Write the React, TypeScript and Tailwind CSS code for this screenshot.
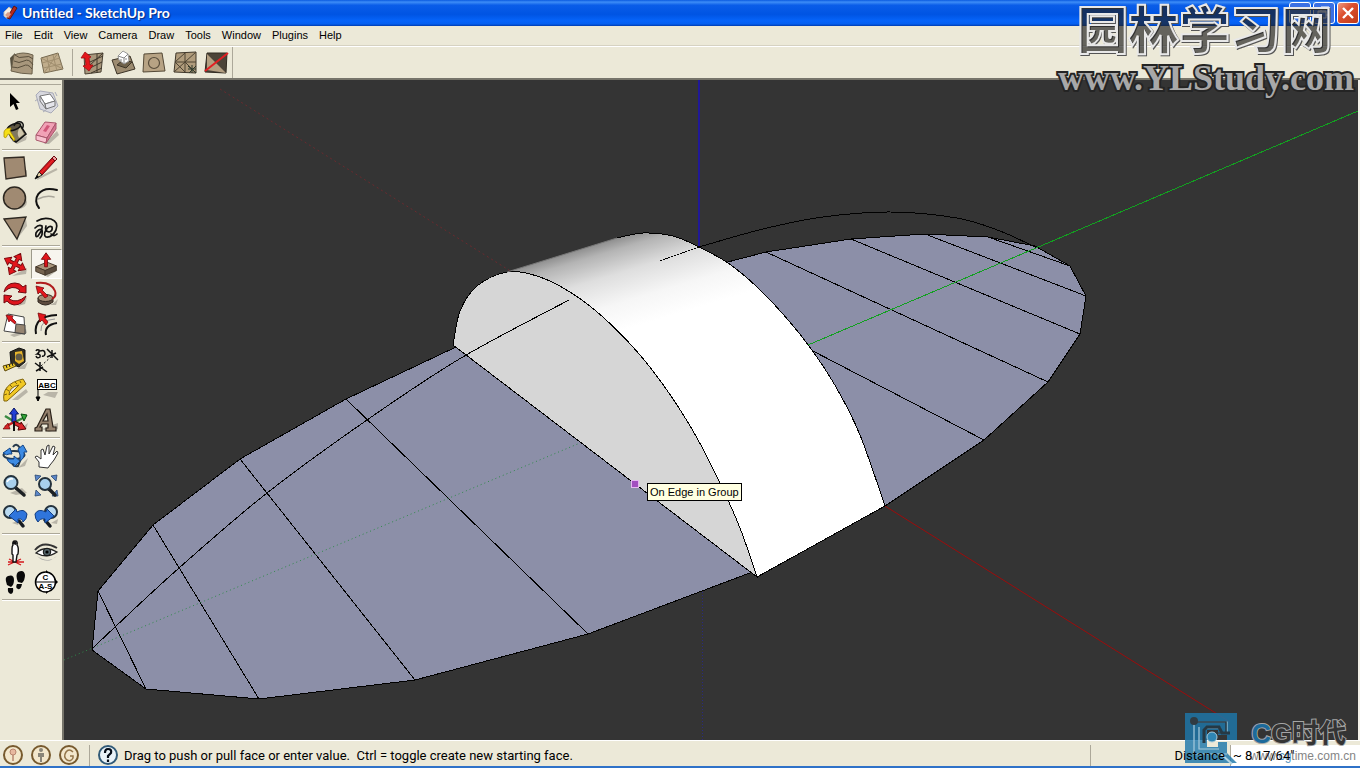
import React from "react";

type Pt = [number, number];

/** Smooth open curve through the given points (Catmull-Rom to Bezier). */
function curve(points: Pt[], start = "M"): string {
  let d = `${start}${points[0][0]} ${points[0][1]}`;
  for (let i = 0; i < points.length - 1; i++) {
    const a = points[Math.max(0, i - 1)];
    const b = points[i];
    const c = points[i + 1];
    const e = points[Math.min(points.length - 1, i + 2)];
    d += `C${b[0] + (c[0] - a[0]) / 6} ${b[1] + (c[1] - a[1]) / 6} ${c[0] - (e[0] - b[0]) / 6} ${c[1] - (e[1] - b[1]) / 6} ${c[0]} ${c[1]}`;
  }
  return d;
}

const frontArch: Pt[] = [[453, 345], [460, 311], [477, 286], [507, 272], [537, 276], [570, 292], [604, 318], [640, 355], [671, 396], [697, 438], [720, 483], [740, 528], [757, 577]];
const backArch: Pt[] = [[617, 238], [643, 233], [673, 236], [699, 247], [728, 263], [756, 286], [782, 313], [809, 346], [836, 387], [860, 435], [885, 506]];
const lowerArc: Pt[] = [[92, 649], [115, 627], [179, 568], [267, 493], [367, 420], [461, 358], [569, 300]];
const upperArc: Pt[] = [[699, 247], [763, 229], [823, 217], [890, 212], [957, 218], [1000, 231], [1037, 248]];

function Model() {
  return (
    <svg className="block h-full w-full" viewBox="64 80 1294 660" preserveAspectRatio="xMidYMid slice" role="img" aria-label="Model view">
      <defs>
        <linearGradient id="vault" gradientUnits="userSpaceOnUse" x1="512" y1="270" x2="538" y2="356">
          <stop offset="0" stopColor="#8f8f8f" />
          <stop offset="0.12" stopColor="#b4b4b4" />
          <stop offset="0.38" stopColor="#dedede" />
          <stop offset="0.7" stopColor="#f6f6f6" />
          <stop offset="1" stopColor="#ffffff" />
        </linearGradient>
      </defs>
      <g fill="none" strokeWidth="1">
        <rect x="698" y="80" width="2" height="167" fill="#1a10b8" fillOpacity=".75" />
        <path d="M702.500 580V740" stroke="#2a2a80" strokeDasharray="1 2" />
        <path d="M220 89L512 272" stroke="#6a2a2e" strokeDasharray="2 3" />
        <path d="M885 506L1230 722" stroke="#9c0c0c" />
      </g>
      <g fill="#8c8fa8" stroke="#000" strokeWidth="1" shapeRendering="crispEdges">
        <path d="M456 347L346 399L240 459L153 525L98 591L92 650L146 689L259 699L415 680L588 634L755 571Z" />
        <path d="M720 264L766 252L851 239L925 234L988 237L1035 246L1070 266L1086 296L1080 334L1048 382L984 440L885 506L760 400Z" />
        <path fill="none" d="M346 399L588 634M240 459L415 680M153 525L259 699M98 591L146 689M766 252L1048 382M851 239L1080 334M925 234L1086 296M988 237L1070 266M811 350L984 440" />
        <path fill="none" d={curve(upperArc)} />
      </g>
      <path d="M64 660L580 443" stroke="#2f8a4a" strokeDasharray="1 3" fill="none" />
      <path d="M808 345L1358 111" stroke="#12a020" fill="none" shapeRendering="crispEdges" />
      <path fill="url(#vault)" d={`${curve(backArch)}L757 577L507 272Z`} />
      <path fill="#d6d6d6" d={`${curve(frontArch)}Z`} />
      <g fill="none" stroke="#000" shapeRendering="crispEdges">
        <path d={`${curve(frontArch)}Z`} />
        <path d={curve(backArch)} />
        <path d="M885 506L757 577" />
        <path d={curve(lowerArc)} />
        <path d="M660 261L699 247" strokeDasharray="2 1" />
      </g>
      <path d="M507 272L617 238" stroke="#777" fill="none" />
      <rect x="631.500" y="480.500" width="7" height="7" fill="#a24fc0" stroke="#e6b8f0" />
    </svg>
  );
}

const shade = "#b9b5a8";

const icons: Record<string, React.ReactNode> = {
  Select: <path d="M10 6V20L13.500 17L16 23L18.500 22L16 16H20Z" fill="#000" />,
  Component: (
    <g strokeLinejoin="round">
      <path d="M5 8L9 4L22 6L27 19L20 26L9 22Z" fill="#d8d8de" stroke="#a9abb8" />
      <path d="M9 9L19 7L24 14L14 17Z" fill="#fff" stroke="#777" />
      <path d="M14 17L24 14V19L15 22ZM9 9L14 17L15 22L9 14Z" fill="#e4e4ea" stroke="#777" />
      <path d="M4 14L7 12M24 5L26 9M12 25L15 23" stroke="#a9abb8" />
    </g>
  ),
  "Paint Bucket": (
    <g>
      <path d="M12 24L27 19L26 23L17 27Z" fill={shade} />
      <path d="M8 12L20 8L26 17L16 25Q10 22 8 12Z" fill="#7f775f" stroke="#111" strokeWidth="1.500" />
      <path d="M20 10L24 17L19 21Q16 16 20 10Z" fill="#cfc6ac" />
      <ellipse cx="14" cy="10" rx="7" ry="3" transform="rotate(-20 14 10)" fill="#5c5442" stroke="#111" strokeWidth="1.500" />
      <path d="M14 9Q16 4 21 5Q25 7 22 12" fill="none" stroke="#111" strokeWidth="1.500" />
      <path d="M11 11Q5 11 4 15V20Q6 22 7 19Q7 17 9 17L14 24L15 22L10 14Z" fill="#f5df18" stroke="#ad9000" strokeWidth=".8" />
    </g>
  ),
  Eraser: (
    <g strokeLinejoin="round">
      <path d="M13 27L26 14L28 18L18 27Z" fill={shade} />
      <path d="M5 18L14 5L25 6L16 21Z" fill="#f1a2b6" stroke="#a9576c" />
      <path d="M5 18L16 21L15 26L5 23Z" fill="#f8c2cf" stroke="#a9576c" />
      <path d="M16 21L25 6V12L15 26Z" fill="#d57591" stroke="#a9576c" />
      <path d="M16 8L19 9L15 15L12 14Z" fill="#d05879" />
    </g>
  ),
  Rectangle: (
    <g>
      <path d="M7 26L27 17V24Z" fill={shade} />
      <path d="M4 5L24 4L26 23L6 26Z" fill="#a08a72" stroke="#322a22" strokeWidth="1.300" />
    </g>
  ),
  Line: (
    <g>
      <path d="M6 26L26 16" stroke={shade} strokeWidth="2" />
      <path d="M8 19L21 5L24 8L11 22Z" fill="#d5121b" stroke="#6a0b10" />
      <path d="M10 20L22 7" stroke="#e8352f" />
      <path d="M21 5L23 3L26 6L24 8Z" fill="#f09d9d" stroke="#6a0b10" />
      <path d="M8 19L11 22L4 26Z" fill="#e7d3a4" stroke="#222" />
      <path d="M4 26L6 22L8 24Z" fill="#000" />
    </g>
  ),
  Circle: (
    <g>
      <ellipse cx="18" cy="19" rx="9" ry="7" fill={shade} />
      <circle cx="14.500" cy="15" r="11" fill="#a08a72" stroke="#2c2720" strokeWidth="1.500" />
    </g>
  ),
  Arc: (
    <g fill="none" strokeLinecap="round">
      <path d="M7 16Q15 12 23 14" stroke="#a9a69b" strokeWidth="1.500" />
      <path d="M8 25C1 17 7 2 26 7" stroke="#111" strokeWidth="2" />
    </g>
  ),
  Polygon: (
    <g>
      <path d="M17 26L26 6L27 13Z" fill={shade} />
      <path d="M4 6L26 4L17 26Z" fill="#a08a72" stroke="#2c2720" strokeWidth="1.300" />
    </g>
  ),
  Freehand: (
    <path d="M6 8Q12 4 20 6Q28 9 25 17Q21 25 15 24Q12 22 15 17Q18 12 21 14Q22 18 18 19Q13 18 15 13M4 15Q8 11 11 13Q12 16 7 23Q4 25 5 20Q8 15 11 17Q12 22 9 25M20 21Q23 24 26 21" fill="none" stroke="#111" strokeWidth="1.700" strokeLinecap="round" />
  ),
  Move: (
    <g>
      <path d="M12 27L27 19L26 25Z" fill={shade} />
      <g fill="#e3161b" stroke="#77090d" strokeWidth=".9" strokeLinejoin="round">
        <path d="M13.500 13V9H10.500L15 3L19.500 9H16.500V13Z" transform="rotate(28 15 15)" />
        <path d="M13.500 13V9H10.500L15 3L19.500 9H16.500V13Z" transform="rotate(118 15 15)" />
        <path d="M13.500 13V9H10.500L15 3L19.500 9H16.500V13Z" transform="rotate(208 15 15)" />
        <path d="M13.500 13V9H10.500L15 3L19.500 9H16.500V13Z" transform="rotate(298 15 15)" />
      </g>
      <circle cx="15" cy="15" r="2.500" fill="#e3161b" />
    </g>
  ),
  "Push/Pull": (
    <g>
      <path d="M7 24L16 27L26 19L27 22L17 29Z" fill={shade} />
      <path d="M4 18L16 13L26 17L14 22Z" fill="#a8957b" stroke="#433628" />
      <path d="M4 18L14 22V27L4 23Z" fill="#766450" stroke="#433628" />
      <path d="M14 22L26 17V22L14 27Z" fill="#5b4d3f" stroke="#433628" />
      <path d="M13.500 18V10H10L15 3L20 10H16.500V18Z" fill="#e3161b" stroke="#77090d" />
    </g>
  ),
  Rotate: (
    <g>
      <path d="M18 27L27 18L25 25Z" fill={shade} />
      <path d="M4 13Q6 4 15 4Q20 4 23 8L26 6V14L18 13L20 11Q12 5 4 13Z" fill="#df151d" stroke="#700a10" />
      <path d="M26 17Q23 26 14 26Q9 25 7 22L4 24V16L12 17L9 20Q17 25 26 17Z" fill="#df151d" stroke="#700a10" />
    </g>
  ),
  "Follow Me": (
    <g>
      <path d="M12 26Q20 28 27 20L25 26Z" fill={shade} />
      <path d="M7 19V23Q14 29 22 23V19Z" fill="#5c4b3e" stroke="#2f261e" />
      <ellipse cx="14.500" cy="19" rx="7.500" ry="3.500" fill="#a38c74" stroke="#2f261e" />
      <path d="M5 4Q20 2 24 12Q26 17 21 20" fill="none" stroke="#b01c1c" strokeWidth="2" />
      <path d="M14 19L9 13L7 15L5 7L13 9L11 11L17 17Z" fill="#e3161b" stroke="#77090d" strokeWidth=".8" />
    </g>
  ),
  Scale: (
    <g>
      <path d="M10 26L26 20L27 24L14 28Z" fill={shade} />
      <path d="M8 5L24 8L25 25L4 22Z" fill="#fff" stroke="#444" />
      <path d="M16 15L25 16V25L15 23.500Z" fill="#958471" stroke="#444" />
      <path d="M15 15L10 11L9 13L6 6L13 7L12 9L16 13Z" fill="#e3161b" stroke="#77090d" strokeWidth=".8" />
    </g>
  ),
  Offset: (
    <g fill="none">
      <path d="M5 25Q2 7 26 6M15 26Q13 16 26 14" stroke="#111" strokeWidth="2" />
      <path d="M10 22Q9 11 24 10" stroke="#999" />
      <path d="M15 16L11 11L9 13L7 4L15 6L13 8L17 13Z" fill="#e3161b" stroke="#77090d" strokeWidth=".8" />
    </g>
  ),
  "Tape Measure": (
    <g>
      <path d="M17 24L28 17L25 24Z" fill={shade} />
      <path d="M10 7L19 3L25 5V17L19 22L11 19Z" fill="#312e25" stroke="#111" />
      <path d="M15 7L22 6L24 16L19 19L15 16Z" fill="#e8b52b" />
      <circle cx="19" cy="12" r="3.500" fill="#615a46" />
      <path d="M3 21L14 18L16 21L5 26Z" fill="#edca2c" stroke="#5b470a" />
      <path d="M6 20L7 23M9 19L10 22M12 18L13 21" stroke="#222" />
    </g>
  ),
  Dimension: (
    <g fill="none" stroke="#111">
      <path d="M5 6Q6 4 8 5Q9 7 6 9Q10 9 9 12Q6 14 5 11M9 6Q14 4 14 9Q13 12 11 11" strokeWidth="1.500" />
      <path d="M16 4L27 15M16 12L25 8M21 5V13M4 18L16 27M5 26L12 22M9 17V26" strokeWidth="1.500" />
      <path d="M10 21L22 10" strokeDasharray="2 2" />
    </g>
  ),
  Protractor: (
    <g>
      <path d="M12 25L26 14L28 17L18 25Z" fill={shade} />
      <path d="M4 26Q1 9 23 4L26 9L7 26Z" fill="#f1c823" stroke="#80640c" />
      <path d="M9 20Q9 12 19 10Z" fill="#ede9dc" stroke="#80640c" />
      <path d="M4 20L7 19M6 14L9 16M10 10L12 12M15 7L17 9M20 6L21 8" stroke="#80640c" />
    </g>
  ),
  Text: (
    <g>
      <path d="M7 8V26M5 22H9L7 26Z" fill="#000" stroke="#000" />
      <path d="M17 17H27L24 23L12 20Z" fill={shade} />
      <rect x="6.500" y="4.500" width="19" height="10" fill="#fff" stroke="#000" />
      <text x="16" y="12.500" textAnchor="middle" fontSize="8" fontWeight="700" fontFamily="Liberation Sans, sans-serif">ABC</text>
    </g>
  ),
  Axes: (
    <g>
      <path d="M17 26L28 18L26 24Z" fill={shade} />
      <path d="M15 17L5 11M15 17L25 12" stroke="#3a8a42" strokeWidth="2.500" />
      <path d="M14 17L5 22" stroke="#c71b1e" strokeWidth="2.500" />
      <path d="M12 17V9H9.500L14 3L18.500 9H16V17Z" fill="#233fd4" stroke="#091662" />
      <path d="M21 9L27 10L24 16Z" fill="#35a83b" stroke="#084b10" />
      <path d="M14 16L21 19V17L26 24L18 25L19 22L13 19Z" fill="#d9262a" stroke="#500" />
      <path d="M8 18L3 24L10 24Z" fill="#d9262a" stroke="#500" strokeWidth=".6" />
      <path d="M14 17V26" stroke="#111" strokeWidth="2" />
    </g>
  ),
  "3D Text": (
    <g>
      <path d="M11 24L27 18L27 24L18 27Z" fill={shade} />
      <path d="M4 23L6 22L15 4H19L22 22H25V26H15V23H17L17 19H11L9 22H11V26H4ZM12 16H17L16 9Z" fill="#94816d" stroke="#282018" strokeWidth="1.200" fillRule="evenodd" />
    </g>
  ),
  Orbit: (
    <g fill="none">
      <path d="M18 27L28 17L25 25Z" fill={shade} />
      <ellipse cx="14" cy="14" rx="10.500" ry="4" stroke="#26394a" strokeWidth="2" />
      <path d="M13 6Q16 1 20 7Q23 15 18 25Q14 26 12 22" stroke="#26394a" strokeWidth="2" />
      <path d="M3 12L10 7L12 13L9 13Q7 15 3 12ZM18 8L23 4L27 11L24 11Q25 17 20 20Q21 14 18 8ZM7 18H14V15L20 20L14 26V23Q9 23 7 18Z" fill="#3d8be3" stroke="#144585" />
    </g>
  ),
  Pan: (
    <path d="M8 26L8 21L4 16L6 15L10 18L10 9L12 8L14 14L16 5L18 4L18 13L22 5L24 6L22 14L26 10L27 12L23 19L19 24L17 27Z" fill="#fff" stroke="#333" strokeLinejoin="round" />
  ),
  Zoom: (
    <g>
      <path d="M10 22L22 17L27 22L16 24Z" fill={shade} />
      <path d="M16 17L24 24" stroke="#1c2023" strokeWidth="3.500" strokeLinecap="round" />
      <circle cx="11" cy="11.500" r="6.500" fill="#a8d0ed" stroke="#24323c" strokeWidth="2" />
      <path d="M7 11Q9 7 13 8" stroke="#fff" strokeWidth="1.500" fill="none" />
    </g>
  ),
  "Zoom Extents": (
    <g>
      <path d="M4 4L10 5L5 10ZM26 4L20 5L25 10ZM4 25L10 24L5 19ZM27 25L21 25L26 19Z" fill="#5b86c8" stroke="#28466f" strokeWidth=".8" />
      <path d="M18 18L24 24" stroke="#1c2023" strokeWidth="3.500" strokeLinecap="round" />
      <circle cx="14" cy="13" r="6" fill="#a8d0ed" stroke="#24323c" strokeWidth="2" />
    </g>
  ),
  Previous: (
    <g>
      <path d="M12 22L20 19L18 24Z" fill={shade} />
      <path d="M19 20L23 25" stroke="#171c22" strokeWidth="3.500" strokeLinecap="round" />
      <circle cx="10" cy="11" r="6" fill="#badaf0" stroke="#24323c" strokeWidth="2" />
      <path d="M9 15L16 8L17 11Q24 7 27 13Q27 18 23 21Q22 17 18 18L18 22Z" fill="#2f75dc" stroke="#113d82" />
    </g>
  ),
  Next: (
    <g>
      <path d="M20 22L27 18L26 23Z" fill={shade} />
      <path d="M14 19L19 25" stroke="#171c22" strokeWidth="3.500" strokeLinecap="round" />
      <circle cx="20" cy="11" r="6" fill="#badaf0" stroke="#24323c" strokeWidth="2" />
      <path d="M23 15L16 8L15 11Q7 7 4 13Q4 18 7 21Q9 17 14 18L14 22Z" fill="#2f75dc" stroke="#113d82" />
    </g>
  ),
  "Position Camera": (
    <g>
      <path d="M9 22L21 28M21 22L8 28M8 25H24" stroke="#d4191d" strokeWidth="1.300" />
      <path d="M12 12Q12 9 13 8Q12 4 15 4Q18 4 17 8Q19 10 18 17L17 18L16 25H13L13 18L12 17Z" fill="#fff" stroke="#111" strokeWidth="1.400" />
      <path d="M13 5Q15 3 17 6L16 8L13 7Z" fill="#111" />
    </g>
  ),
  "Look Around": (
    <g>
      <path d="M6 19Q17 27 26 19L20 23Q12 25 6 19Z" fill="#999" />
      <path d="M5 16Q14 8 26 15Q16 22 5 16Z" fill="#fff" stroke="#222" strokeWidth="1.300" />
      <path d="M4 13Q12 3 26 11" fill="none" stroke="#333" strokeWidth="2" />
      <circle cx="16" cy="15" r="3.800" fill="#526267" stroke="#111" />
      <circle cx="16" cy="15" r="1.600" fill="#000" />
    </g>
  ),
  Walk: (
    <g fill="#0a0a0a">
      <path d="M8 9Q14 7 14 13Q14 18 11 20L7 18Q4 10 8 9ZM8 21L13 21Q14 26 11 27Q7 26 8 21ZM18 5Q24 2 25 8Q25 13 22 16L18 15Q15 8 18 5ZM17 17L22 17Q21 23 18 22Q15 21 17 17Z" />
    </g>
  ),
  "Section Plane": (
    <g>
      <path d="M15 3L27 15L15 27Z" fill="#000" />
      <circle cx="14.500" cy="15" r="10" fill="#fff" stroke="#000" strokeWidth="1.500" />
      <path d="M4 15H25" stroke="#000" />
      <text x="14.500" y="13" textAnchor="middle" fontSize="8" fontWeight="700" fontFamily="Liberation Sans, sans-serif">C</text>
      <text x="14.500" y="22" textAnchor="middle" fontSize="8" fontWeight="700" fontFamily="Liberation Sans, sans-serif">A-S</text>
    </g>
  ),
};

const toolGroups: string[][] = [
  ["Select", "Component", "Paint Bucket", "Eraser"],
  ["Rectangle", "Line", "Circle", "Arc", "Polygon", "Freehand"],
  ["Move", "Push/Pull", "Rotate", "Follow Me", "Scale", "Offset"],
  ["Tape Measure", "Dimension", "Protractor", "Text", "Axes", "3D Text"],
  ["Orbit", "Pan", "Zoom", "Zoom Extents", "Previous", "Next"],
  ["Position Camera", "Look Around", "Walk", "Section Plane"],
];

const wood = "#a8977c";

const sandbox: Record<string, React.ReactNode> = {
  "From Contours": (
    <g>
      <path d="M4 10L9 5L9 24L5 20Z" fill="#57503f" />
      <path d="M8 7Q17 3 27 7L26 26Q15 26 5 23Z" fill={wood} stroke="#6b604b" />
      <path d="M9 7Q13 11 18 9T27 11M8 13Q13 16 18 13T27 17M6 19Q12 21 17 18T26 21" fill="none" stroke="#5a4f3c" />
    </g>
  ),
  "From Scratch": (
    <g>
      <path d="M4 10L21 5L26 21L7 25Z" fill="#c0ad8c" stroke="#75684f" />
      <path d="M5 15L23 10M6 20L25 16M10 9L13 24M16 7L20 23M4 10L26 21M21 5L7 25" fill="none" stroke="#a08e6e" />
    </g>
  ),
  Smoove: (
    <g>
      <path d="M7 7L26 5L24 24L8 26Z" fill={wood} stroke="#4a4234" />
      <path d="M20 6L20 25M13 14L26 8M13 20L25 14M14 25L25 20M26 5L12 18" fill="none" stroke="#40382b" />
      <path d="M8 4L14 9L12 10L13 17L16 17L12 23L6 18L9 17L8 10L4 10Z" fill="#e3171b" stroke="#a00e12" strokeWidth=".8" />
    </g>
  ),
  Stamp: (
    <g>
      <path d="M4 12L22 8L27 21L9 26Z" fill="#9c8b70" stroke="#3c3427" />
      <path d="M9 17L18 20L24 14L15 12Z" fill="#6e614b" stroke="#3c3427" />
      <path d="M10 8L15 3L20 6L21 13L16 16L11 12Z" fill="#fff" stroke="#999" />
      <path d="M10 8L16 10L20 6M16 10V16M13 11V13M18 10V12" fill="none" stroke="#888" />
    </g>
  ),
  Drape: (
    <g>
      <path d="M5 6L23 5L26 23L4 24Z" fill="#b7a384" stroke="#544936" />
      <circle cx="15" cy="15" r="5.500" fill="none" stroke="#584d3b" strokeWidth="1.200" />
    </g>
  ),
  "Add Detail": (
    <g>
      <path d="M6 5L26 4L26 25L4 24Z" fill="#b09c7c" stroke="#40382b" />
      <path d="M15 5L15 24M5 14L26 14M15 5L5 14M26 4L4 24M15 14L26 25M5 14L15 24" stroke="#4e4433" fill="none" />
      <path d="M18 18L26 25M22 17V25M18 21H26M19 25L26 18" stroke="#2c382a" />
    </g>
  ),
  "Flip Edge": (
    <g>
      <path d="M6 5H26L25 25L4 24Z" fill="#4c4438" stroke="#302a20" />
      <path d="M6 6V22L25 25Z" fill="#b49f81" />
      <path d="M4 23L27 5" stroke="#e21e22" strokeWidth="2" />
    </g>
  ),
};

function SandboxButton({ name }: { name: string }) {
  return (
    <button type="button" aria-label={name} className="h-[30px] w-[31px] shrink-0">
      <svg viewBox="0 0 31 30" className="block h-[30px] w-[31px]">{sandbox[name]}</svg>
    </button>
  );
}

function ToolButton({ name, active }: { name: string; active?: boolean }) {
  return (
    <button
      type="button"
      aria-label={name}
      aria-pressed={!!active}
      className={active ? "h-[30px] w-[31px] border border-t-[#9d9a8b] border-l-[#9d9a8b] border-r-white border-b-white bg-[#f7f5ee]" : "h-[30px] w-[31px]"}
    >
      <svg viewBox="0 0 31 30" className="block h-full w-full">{icons[name]}</svg>
    </button>
  );
}

function TitleBar() {
  return (
    <header className="flex h-[26px] shrink-0 items-center gap-1 bg-[linear-gradient(#0a5ae0_0%,#3d8df7_8%,#0a5de8_20%,#0054e3_55%,#0664fa_80%,#0560f0_92%,#003cb0_100%)] pr-px pl-[2px]">
      <svg viewBox="0 0 16 20" className="h-5 w-4 shrink-0">
        <path d="M2 9L7 4L12 8L6 16L2 13Z" fill="#f5eee4" stroke="#bbb" />
        <path d="M5 15L12 3L15 5L8 16Z" fill="#b8281c" stroke="#5b1712" />
        <path d="M3 12L6 9L9 11L6 15Z" fill="#d99c86" />
      </svg>
      <h1 className="grow font-['Lato','Noto_Sans',sans-serif] text-sm font-bold text-white [text-shadow:1px_1px_1px_#0a2a80]">Untitled - SketchUp Pro</h1>
      <div className="flex gap-[2px]">
        <button type="button" aria-label="Minimize" className="h-[22px] w-[22px] rounded-[3px] border border-white bg-[#3a70e4]">
          <svg viewBox="0 0 20 20"><path d="M4 14H11" stroke="#fff" strokeWidth="3" /></svg>
        </button>
        <button type="button" aria-label="Restore" className="h-[22px] w-[22px] rounded-[3px] border border-white bg-[#3a70e4]">
          <svg viewBox="0 0 20 20" fill="none" stroke="#fff"><path d="M7 8V4H15V12H12M7 5H15" /><path d="M4 8H12V15H4ZM4 9H12" /></svg>
        </button>
        <button type="button" aria-label="Close" className="h-[22px] w-[22px] rounded-[3px] border border-white bg-[linear-gradient(135deg,#ee9a80,#dc5030_40%,#c03a18)]">
          <svg viewBox="0 0 20 20"><path d="M5 5L15 15M15 5L5 15" stroke="#fff" strokeWidth="2.400" /></svg>
        </button>
      </div>
    </header>
  );
}

const menus = ["File", "Edit", "View", "Camera", "Draw", "Tools", "Window", "Plugins", "Help"];

function StatusBadge({ label, children }: { label: string; children: React.ReactNode }) {
  return (
    <button type="button" aria-label={label} className="h-[22px] w-[22px] shrink-0">
      <svg viewBox="0 0 22 22" className="h-[22px] w-[22px]">
        <circle cx="11" cy="11" r="9" fill="#f3e7cc" stroke="#775a2e" strokeWidth="2" />
        {children}
      </svg>
    </button>
  );
}

function StatusBar() {
  return (
    <footer className="flex h-7 shrink-0 items-stretch border-t border-b-2 border-t-white border-b-[#2f72c8] bg-[#ece9d8]">
      <div className="flex items-end gap-[6px] px-[2px]">
        <StatusBadge label="Geo-location">
          <circle cx="11" cy="8" r="3" fill="#e7b8a0" stroke="#b98670" />
          <path d="M11 11V17" stroke="#b98670" strokeWidth="1.500" />
        </StatusBadge>
        <StatusBadge label="Credits">
          <circle cx="11" cy="6" r="2" fill="#8a8578" />
          <path d="M8 9H14V13H12V18H10V13H8Z" fill="#8a8578" />
        </StatusBadge>
        <StatusBadge label="Claim credit">
          <path d="M15 8Q11 4 8 8Q5 13 9 16Q13 18 15 14V12H12" fill="none" stroke="#94764a" strokeWidth="1.500" />
        </StatusBadge>
      </div>
      <div className="mx-[7px] mt-1 w-px bg-[#aca899]" />
      <div className="flex grow items-end gap-[5px]">
        <button type="button" aria-label="Help" className="h-[22px] w-[22px] shrink-0">
          <svg viewBox="0 0 22 22" className="h-[22px] w-[22px]">
            <circle cx="11" cy="11" r="9" fill="#e9f2f8" stroke="#315a77" strokeWidth="2" />
            <path d="M8 9Q8 5 11 5Q15 5 14 9L11 12V14M11 15.500V18" fill="none" stroke="#050d18" strokeWidth="2.200" />
          </svg>
        </button>
        <p className="font-['Roboto',sans-serif] text-[13px] leading-5 whitespace-pre">Drag to push or pull face or enter value.  Ctrl = toggle create new starting face.</p>
      </div>
      <div className="mt-1 flex w-[270px] items-stretch border-l border-[#aca899] font-['Roboto',sans-serif] text-[13px]">
        <label htmlFor="vcb" className="relative z-10 flex w-[139px] shrink-0 items-center justify-end pr-[5px]">Distance</label>
        <div className="flex min-w-0 grow border-l border-[#aca899] bg-white">
          <input id="vcb" defaultValue={'~ 8 17/64"'} className="relative z-10 w-full bg-transparent px-[2px] outline-none" />
        </div>
      </div>
    </footer>
  );
}

function StudyWatermark() {
  return (
    <div className="pointer-events-none absolute top-0 right-[6px] flex flex-col items-end">
      <p className="mr-[22px] font-['Noto_Sans_CJK_SC',sans-serif] text-[51px] leading-[54px] font-black text-[#0000006b] [-webkit-text-stroke:2px_#e8e8e8] [filter:drop-shadow(1px_1px_0_#555)]">园林学习网</p>
      <p className="font-['Liberation_Serif',serif] text-4xl leading-[48px] font-bold text-[#a8a8a8] [-webkit-text-stroke:4px_#242424] [paint-order:stroke_fill]">www.YLStudy.com</p>
    </div>
  );
}

function TimeWatermark() {
  return (
    <div className="pointer-events-none absolute right-[4px] bottom-[3px] flex items-start gap-[13px]">
      <svg viewBox="0 0 52 52" className="h-[52px] w-[52px]" fill="none">
        <path d="M0 0H52V27H42V22H33V17H22V34H33V29H42V40L52 50H0Z" fill="#1d78ab" fillOpacity=".82" />
        <path d="M9 9V41H42M9 9H42V20H33M14 14V36H34M20 15H36" stroke="#a7cbdc" strokeWidth="1.200" />
        <path d="M9 9H41V20H29" stroke="#263944" strokeWidth="1.500" />
        <path d="M19 30V17L22 14H34L37 20H45" stroke="#263944" strokeWidth="3" />
        <circle cx="9" cy="8" r="4" fill="#303b42" />
        <circle cx="27" cy="24" r="5" fill="#2f86b4" stroke="#a7cbdc" />
        <path d="M36 41L47 51" stroke="#b3d5e4" strokeWidth="2" />
      </svg>
      <div className="flex flex-col items-end pt-[5px]">
        <p className="mr-[10px] font-['Liberation_Sans','Noto_Sans_CJK_SC',sans-serif] text-[27px] leading-[32px] font-bold text-[#343434] [-webkit-text-stroke:2px_#a5a5a5] [paint-order:stroke_fill]">
          <span className="text-[#1c6a9b]">C</span>G时代
        </p>
        <p className="font-['Liberation_Sans',sans-serif] text-xs leading-3 text-[#858585]">
          www.<span className="text-[#5594bd]">cg</span>time.com.cn
        </p>
      </div>
    </div>
  );
}

export default function App() {
  return (
    <div className="relative flex h-screen flex-col overflow-hidden bg-[#ece9d8] font-['Liberation_Sans',sans-serif] text-black">
      <TitleBar />
      <nav className="flex h-5 shrink-0 items-center gap-[11px] border-b border-[#d6d2c2] px-[5px] text-[11px]">
        {menus.map((m) => (
          <button type="button" key={m}>{m}</button>
        ))}
      </nav>
      <div className="flex h-[34px] shrink-0 border-t border-b-2 border-t-white border-b-[#77756b]" role="toolbar" aria-label="Sandbox">
        <div className="flex items-center border-r border-[#aca899] pl-[6px]">
          <SandboxButton name="From Contours" />
          <SandboxButton name="From Scratch" />
          <div className="mr-[4px] ml-[4px] h-[27px] w-px bg-[#aca899]" />
          {["Smoove", "Stamp", "Drape", "Add Detail", "Flip Edge"].map((n) => (
            <SandboxButton key={n} name={n} />
          ))}
        </div>
      </div>
      <main className="flex min-h-0 grow">
        <aside className="w-16 shrink-0 border-r-2 border-[#77756b] pt-[4px]" aria-label="Large tool set">
          <div className="mb-[2px] h-px w-[61px] bg-[#aca899]" />
          {toolGroups.map((group) => (
            <div key={group[0]} className="w-[62px]">
              <div className="grid grid-cols-2">
                {group.map((t) => (
                  <ToolButton key={t} name={t} active={t === "Push/Pull"} />
                ))}
              </div>
              <div className="mx-[2px] my-[2px] h-[2px] border-t border-b border-t-[#aca899] border-b-white" />
            </div>
          ))}
        </aside>
        <section className="relative min-w-0 grow bg-[#343434]">
          <div className="absolute inset-0">
            <Model />
          </div>
          <div role="tooltip" className="absolute top-[403px] left-[583px] border border-black bg-[#ffffe1] px-[2px] text-[11px] leading-4 whitespace-nowrap">
            On Edge in Group
          </div>
        </section>
        <div className="w-[2px] shrink-0 bg-[#f4f2ea]" />
      </main>
      <StatusBar />
      <StudyWatermark />
      <TimeWatermark />
    </div>
  );
}
